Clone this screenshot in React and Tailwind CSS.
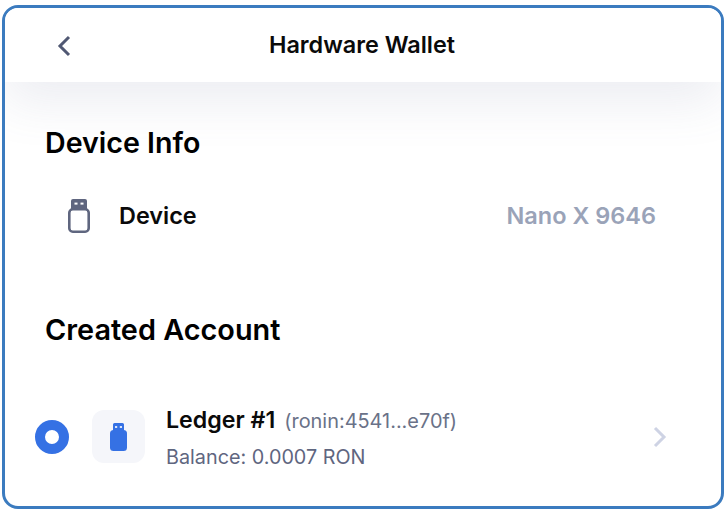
function UsbIcon({ className, filled }) {
  if (filled) {
    return (
      <svg viewBox="0 0 17 28" className={className}>
        <path d="M3 1.5A1.5 1.5 0 0 1 4.5 0h8A1.5 1.5 0 0 1 14 1.5V8H3z" fill="#3571e4" />
        <rect x="5" y="3.2" width="2.2" height="1.6" fill="#fff" />
        <rect x="9.8" y="3.2" width="2.2" height="1.6" fill="#fff" />
        <rect x="0" y="7" width="17" height="21" rx="3.5" fill="#3571e4" />
      </svg>
    );
  }
  return (
    <svg viewBox="0 0 22 34" className={className} fill="none">
      <rect x="1.3" y="10.3" width="19.4" height="22.4" rx="3.5" stroke="#5f667f" strokeWidth="2.6" />
      <path d="M3 10V2a2 2 0 0 1 2-2h12a2 2 0 0 1 2 2v8z" fill="#5f667f" />
      <rect x="6.5" y="3.6" width="3" height="2" fill="#fff" />
      <rect x="12.5" y="3.6" width="3" height="2" fill="#fff" />
    </svg>
  );
}

export default function App() {
  return (
    <div className="w-[726px] h-[516px] bg-white pt-[5px] pl-[2px] font-['Inter','Liberation_Sans',sans-serif]">
      <div className="w-[722px] h-[504px] border-[3px] border-[#3b7bbf] rounded-[16px] overflow-hidden flex flex-col">
        {/* Header */}
        <div className="h-[74px] shrink-0 flex items-center justify-center pr-[2px] relative bg-white shadow-[0_20px_50px_rgba(100,110,150,0.12)]">
          <svg viewBox="0 0 14 22" className="absolute left-[52px] top-[27px] w-[14px] h-[22px]" fill="none">
            <path d="M12 2L3 11l9 9" stroke="#505873" strokeWidth="3" />
          </svg>
          <span className="text-[23.4px] font-semibold text-[#0a0a0a]">Hardware Wallet</span>
        </div>
        <div className="flex-1 flex flex-col">
          {/* Device info */}
          <h2 className="text-[28.6px] leading-[32px] font-semibold text-black ml-[40px] mt-[45px]">Device Info</h2>
          <div className="flex items-center mt-[39px] ml-[63px] mr-[65px]">
            <UsbIcon className="w-[22px] h-[34px]" />
            <span className="text-[23.4px] font-semibold text-[#0a0a0a] ml-[29px]">Device</span>
            <span className="ml-auto text-[23.5px] font-semibold text-[#9aa3b8]">Nano X 9646</span>
          </div>
          {/* Created account */}
          <h2 className="text-[28.85px] leading-[32px] font-semibold text-black ml-[40px] mt-[81px]">Created Account</h2>
          <div className="flex items-center mt-[58px] ml-[30px]">
            <div className="w-[34px] h-[34px] rounded-full border-[10px] border-[#3571e4] bg-white shrink-0" />
            <div className="w-[53px] h-[53px] ml-[23px] rounded-[12px] bg-[#f5f6fa] flex items-center justify-center shrink-0">
              <UsbIcon filled className="w-[17px] h-[28px]" />
            </div>
            <div className="ml-[21px] flex flex-col gap-[12px] mt-[3px]">
              <div className="flex items-baseline gap-[9px]">
                <span className="text-[23.2px] leading-[26px] font-semibold text-[#0a0a0a]">Ledger #1</span>
                <span className="text-[19.9px] leading-[24px] text-[#6a7288]">(ronin:4541...e70f)</span>
              </div>
              <span className="text-[19.8px] leading-[24px] text-[#5f667f]">Balance: 0.0007 RON</span>
            </div>
            <svg viewBox="0 0 14 22" className="ml-auto mr-[54px] w-[14px] h-[22px]" fill="none">
              <path d="M2 2l9 9-9 9" stroke="#ced3e4" strokeWidth="3" />
            </svg>
          </div>
        </div>
      </div>
    </div>
  );
}
